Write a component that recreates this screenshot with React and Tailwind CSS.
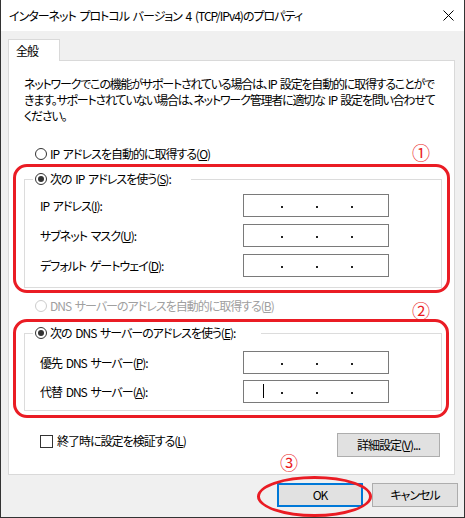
import React from "react";

const ipLabels = [
  ["IP アドレス(", "I", "):"],
  ["サブネット マスク(", "U", "):"],
  ["デフォルト ゲートウェイ(", "D", "):"],
];

const dnsLabels = [
  ["優先 DNS サーバー(", "P", "):"],
  ["代替 DNS サーバー(", "A", "):"],
];

function Radio({ checked, disabled }) {
  return (
    <span
      className={`w-[12px] h-[12px] rounded-full border bg-white flex items-center justify-center shrink-0 ${
        disabled ? "border-[#cccccc]" : "border-[#333333]"
      }`}
    >
      {checked && <span className="w-[6px] h-[6px] rounded-full bg-[#333333]" />}
    </span>
  );
}

function IpBox({ caret }) {
  return (
    <div className="relative h-[23px] w-[146px] border border-[#7a7a7a] bg-white flex items-center pl-[37px] gap-[33px]">
      {caret && <span className="absolute left-[19px] top-[3px] w-px h-[14px] bg-black" />}
      <span className="w-[2px] h-[2px] bg-[#222] mt-[3px]" />
      <span className="w-[2px] h-[2px] bg-[#222] mt-[3px]" />
      <span className="w-[2px] h-[2px] bg-[#222] mt-[3px]" />
    </div>
  );
}

function Label({ parts }) {
  return (
    <span className="whitespace-nowrap">
      {parts[0]}
      <u>{parts[1]}</u>
      {parts[2]}
    </span>
  );
}

export default function App() {
  return (
    <div className="relative w-[465px] h-[518px] bg-[#f0f0f0] border-x border-b border-[#333333] text-[12px] leading-[16px] tracking-[-1px] [word-spacing:2px] text-black font-['Noto_Sans_CJK_JP',sans-serif] [font-feature-settings:'palt'] overflow-hidden">
      {/* title bar */}
      <div className="h-[31px] bg-white flex items-center justify-between pl-[8px] pr-[10px]">
        <span className="whitespace-nowrap">インターネット プロトコル バージョン 4 (TCP/IPv4)のプロパティ</span>
        <svg width="11" height="11" viewBox="0 0 11 11" className="text-black">
          <path d="M0.5 0.5 L10.5 10.5 M10.5 0.5 L0.5 10.5" stroke="currentColor" strokeWidth="1" />
        </svg>
      </div>

      <div className="mt-[8px] ml-[7px] mr-[9px]">
        <div className="relative z-10 -mb-px w-[52px] h-[22px] bg-white border-x border-t border-[#d9d9d9] pl-[7px] flex items-center">
          全般
        </div>
        <div className="h-[415px] bg-white border border-[#d9d9d9] pl-[15px] pr-[12px] pt-[15px]">
          <p className="whitespace-nowrap tracking-[-1.2px]">
            ネットワークでこの機能がサポートされている場合は、IP 設定を自動的に取得することがで
            <br />
            きます。サポートされていない場合は、ネットワーク管理者に適切な IP 設定を問い合わせて
            <br />
            ください。
          </p>

          <div className="mt-[22px] ml-[11px] flex items-center gap-[3px]">
            <Radio />
            <Label parts={["IP アドレスを自動的に取得する(", "O", ")"]} />
          </div>

          <fieldset className="mt-[9px] border border-[#dcdcdc] pt-[7px] pb-[10px] pl-[15px]">
            <legend className="-ml-[7px] pl-[2px] w-[158px] flex items-center gap-[3px] bg-white">
              <Radio checked />
              <Label parts={["次の IP アドレスを使う(", "S", "):"]} />
            </legend>
            <div className="flex flex-col gap-[7px]">
              {ipLabels.map((l) => (
                <div key={l[1]} className="grid grid-cols-[203px_146px] items-center">
                  <Label parts={l} />
                  <IpBox />
                </div>
              ))}
            </div>
          </fieldset>

          <div className="mt-[10px] ml-[11px] flex items-center gap-[3px] text-[#a0a0a0]">
            <Radio disabled />
            <Label parts={["DNS サーバーのアドレスを自動的に取得する(", "B", ")"]} />
          </div>

          <fieldset className="mt-[11px] border border-[#dcdcdc] pt-[10px] pb-[7px] pl-[15px]">
            <legend className="-ml-[7px] pl-[2px] w-[228px] flex items-center gap-[3px] bg-white">
              <Radio checked />
              <Label parts={["次の DNS サーバーのアドレスを使う(", "E", "):"]} />
            </legend>
            <div className="flex flex-col gap-[6px]">
              {dnsLabels.map((l, i) => (
                <div key={l[1]} className="grid grid-cols-[203px_146px] items-center">
                  <Label parts={l} />
                  <IpBox caret={i === 1} />
                </div>
              ))}
            </div>
          </fieldset>

          <div className="mt-[22px] pl-[16px] pr-[2px] flex items-start justify-between">
            <div className="h-[16px] flex items-center gap-[4px]">
              <span className="w-[13px] h-[13px] border border-[#333333] bg-white" />
              <Label parts={["終了時に設定を検証する(", "L", ")"]} />
            </div>
            <button className="w-[103px] h-[24px] bg-[#e1e1e1] border border-[#adadad] flex items-center justify-center">
              <Label parts={["詳細設定(", "V", ")..."]} />
            </button>
          </div>
        </div>
      </div>

      <div className="mt-[8px] pr-[6px] flex justify-end gap-[9px]">
        <button className="w-[86px] h-[24px] bg-[#e1e1e1] border-2 border-[#0078d7] flex items-center justify-center">
          OK
        </button>
        <button className="w-[86px] h-[24px] bg-[#e1e1e1] border border-[#adadad] flex items-center justify-center">
          キャンセル
        </button>
      </div>

      {/* red annotations */}
      <div className="absolute left-[12px] top-[164px] w-[437px] h-[129px] border-[3px] border-[#ea1c24] rounded-[14px] pointer-events-none" />
      <div className="absolute left-[12px] top-[319px] w-[436px] h-[99px] border-[3px] border-[#ea1c24] rounded-[14px] pointer-events-none" />
      <div className="absolute left-[256px] top-[476px] w-[115px] h-[41px] border-[3px] border-[#ea1c24] rounded-[50%] pointer-events-none" />
      <span className="absolute left-[411px] top-[143px] text-[18px] leading-[18px] tracking-normal text-[#ea1c24]">①</span>
      <span className="absolute left-[411px] top-[301px] text-[18px] leading-[18px] tracking-normal text-[#ea1c24]">②</span>
      <span className="absolute left-[279px] top-[453px] text-[18px] leading-[18px] tracking-normal text-[#ea1c24]">③</span>
    </div>
  );
}
